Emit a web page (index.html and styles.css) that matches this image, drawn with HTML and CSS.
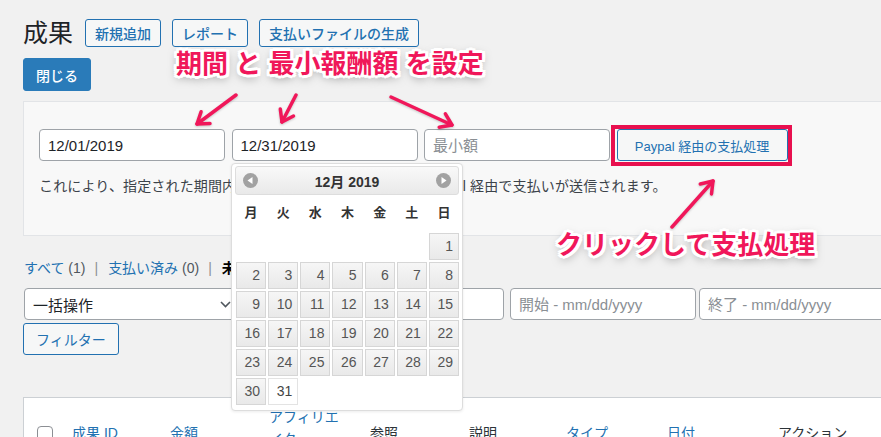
FILE: index.html
```html
<!DOCTYPE html>
<html lang="ja">

<head>
    <meta charset="UTF-8">
    <meta name="viewport" content="width=device-width, initial-scale=1.0">
    <title>成果</title>
    <link rel="stylesheet" href="styles.css">
</head>

<body>
    <div class="wrap">
        <div class="title-row">
            <h1>成果</h1>
            <a class="btn" href="#">新規追加</a>
            <a class="btn" href="#">レポート</a>
            <a class="btn" href="#">支払いファイルの生成</a>
        </div>

        <button class="btn-primary">閉じる</button>

        <div class="payout-panel">
            <div class="payout-fields">
                <input class="field" type="text" value="12/01/2019">
                <input class="field" type="text" value="12/31/2019">
                <input class="field" type="text" placeholder="最小額">
                <button class="btn btn-paypal">Paypal 経由の支払処理</button>
            </div>
            <p class="payout-note">これにより、指定された期間内の未払い成果すべてに対して Paypal 経由で支払いが送信されます。</p>
        </div>

        <ul class="subsubsub">
            <li><a href="#">すべて</a> <span class="count">(1)</span><span class="sep">|</span></li>
            <li><a href="#">支払い済み</a> <span class="count">(0)</span><span class="sep">|</span></li>
            <li class="current">未払い <span class="count">(1)</span></li>
        </ul>

        <div class="filters">
            <div class="select">
                <span>一括操作</span>
                <svg width="11" height="7" viewBox="0 0 11 7"><path d="M1 1l4.5 4.5L10 1" fill="none" stroke="#50575e" stroke-width="1.6"/></svg>
            </div>
            <input class="field field-affiliate" type="text" placeholder="アフィリエイター">
            <input class="field" type="text" placeholder="開始 - mm/dd/yyyy">
            <input class="field field-end" type="text" placeholder="終了 - mm/dd/yyyy">
        </div>
        <button class="btn btn-filter">フィルター</button>

        <div class="list-table">
            <div class="thead">
                <div class="th th-check"><span class="checkbox"></span></div>
                <div class="th"><a href="#">成果 ID</a></div>
                <div class="th"><a href="#">金額</a></div>
                <div class="th th-wrap"><a href="#">アフィリエイター</a></div>
                <div class="th">参照</div>
                <div class="th">説明</div>
                <div class="th"><a href="#">タイプ</a></div>
                <div class="th"><a href="#">日付</a></div>
                <div class="th">アクション</div>
            </div>
        </div>
    </div>

    <!-- datepicker popup under the end date field -->
    <div class="datepicker">
        <div class="dp-header">
            <svg width="15" height="15" viewBox="0 0 15 15"><circle cx="7.5" cy="7.5" r="7.5" fill="#a2a2a2"/><path d="M9.5 4v7L4.5 7.5z" fill="#fff"/></svg>
            <span class="dp-title">12月 2019</span>
            <svg width="15" height="15" viewBox="0 0 15 15"><circle cx="7.5" cy="7.5" r="7.5" fill="#a2a2a2"/><path d="M5.5 4v7l5-3.5z" fill="#fff"/></svg>
        </div>
        <div class="dp-weekdays">
            <span>月</span><span>火</span><span>水</span><span>木</span><span>金</span><span>土</span><span>日</span>
        </div>
        <div class="dp-days">
            <span class="empty"></span><span class="empty"></span><span class="empty"></span>
            <span class="empty"></span><span class="empty"></span><span class="empty"></span>
            <a>1</a>
            <a>2</a><a>3</a><a>4</a><a>5</a><a>6</a><a>7</a><a>8</a>
            <a>9</a><a>10</a><a>11</a><a>12</a><a>13</a><a>14</a><a>15</a>
            <a>16</a><a>17</a><a>18</a><a>19</a><a>20</a><a>21</a><a>22</a>
            <a>23</a><a>24</a><a>25</a><a>26</a><a>27</a><a>28</a><a>29</a>
            <a>30</a><a class="active">31</a>
        </div>
    </div>

    <!-- annotations -->
    <div class="highlight"></div>
    <div class="note note-range">期間 と 最小報酬額 を設定</div>
    <div class="note note-click">クリックして支払処理</div>
    <svg class="arrows" width="881" height="437" viewBox="0 0 881 437">
        <g fill="none" stroke="#f0175a" stroke-width="3.5" stroke-linecap="round" stroke-linejoin="round">
            <path d="M236 95L197 124"/>
            <path d="M210 123.6L197 124L201.1 111.7"/>
            <path d="M296 95L282 122"/>
            <path d="M293.5 116L282 122L280.3 109.1"/>
            <path d="M391 97L452 125"/>
            <path d="M445.4 113.8L452 125L439.2 127.3"/>
            <path d="M672 227L713 181"/>
            <path d="M700.3 184L713 181L711.5 193.9"/>
        </g>
    </svg>
</body>

</html>
```

FILE: styles.css
```css
:root {
    --wp-blue: #2271b1;
    --text-color: #1d2327;
    --muted: #50575e;
    --border: #9ea3a8;
    --note-color: #f0175a;
}

html,
body {
    margin: 0;
    overflow: hidden;
}

body {
    position: relative;
    width: 881px;
    height: 437px;
    background-color: #f1f1f1;
    color: var(--text-color);
    font-family: "Liberation Sans", "Noto Sans CJK JP", sans-serif;
    font-size: 14px;
}

a {
    color: var(--wp-blue);
    text-decoration: none;
}

.wrap {
    width: 1100px;
    padding-left: 23px;
}

.title-row {
    display: flex;
    align-items: center;
    gap: 11px;
    margin-top: 19px;
    height: 28px;
}

h1 {
    margin: 0 1px 0 0;
    font-size: 25px;
    font-weight: 400;
    line-height: 28px;
}

.btn {
    display: inline-flex;
    align-items: center;
    box-sizing: border-box;
    height: 28px;
    padding: 0 9px;
    border: 1px solid var(--wp-blue);
    border-radius: 3px;
    background-color: #f6f7f7;
    color: var(--wp-blue);
    font-family: inherit;
    font-size: 14px;
    font-weight: 500;
}

.btn-primary {
    display: block;
    box-sizing: border-box;
    height: 33px;
    margin-top: 11px;
    padding: 0 12px;
    border: 1px solid #2a7bb9;
    border-radius: 3px;
    background-color: #2a7bb9;
    color: #fff;
    font-family: inherit;
    font-size: 14px;
    font-weight: 500;
}

.payout-panel {
    margin-top: 10px;
    padding: 27px 15px 38px;
    border: 1px solid #e2e4e7;
    background-color: #f8f8f8;
}

.payout-fields {
    display: flex;
    gap: 6.5px;
}

.field {
    box-sizing: border-box;
    width: 186px;
    height: 32px;
    margin: 0;
    padding: 0 8px;
    border: 1px solid var(--border);
    border-radius: 4px;
    background-color: #fff;
    color: var(--text-color);
    font-family: inherit;
    font-size: 15px;
}

.field::placeholder {
    color: #8a8f94;
}

.btn-paypal {
    width: 171px;
    height: 32px;
    justify-content: center;
    padding: 0;
    font-size: 13px;
    font-weight: 400;
}

.payout-note {
    margin: 14px 0 0;
    color: #3c434a;
    font-size: 14px;
    line-height: 22px;
    letter-spacing: 0.15px;
}

.subsubsub {
    display: flex;
    margin: 21px 0 0 1px;
    padding: 0;
    list-style: none;
    line-height: 22px;
    color: var(--muted);
}

.subsubsub .sep {
    margin: 0 10px 0 9px;
    color: #8c8f94;
}

.subsubsub .current {
    color: #000;
    font-weight: 600;
}

.filters {
    display: flex;
    gap: 6px;
    margin: 9px 0 0 1px;
}

.select {
    display: flex;
    align-items: center;
    justify-content: space-between;
    box-sizing: border-box;
    width: 216px;
    height: 32px;
    padding: 0 8px 0 8px;
    border: 1px solid var(--border);
    border-radius: 4px;
    background-color: #fff;
    font-size: 15px;
}

.field-affiliate {
    width: 258px;
}

.field-end {
    margin-left: -3px;
}

.btn-filter {
    display: flex;
    height: 32px;
    margin-top: 3px;
    padding: 0 12px;
    font-weight: 400;
}

.list-table {
    margin-top: 42px;
    border: 1px solid #ccd0d4;
    background-color: #fff;
}

.thead {
    display: grid;
    grid-template-columns: 48px 98px 99px 101px 99px 97px 101px 111px 120px;
    height: 60px;
    font-size: 14px;
    line-height: 22px;
    color: #2c3338;
}

.th {
    padding-top: 24px;
}

.th-wrap {
    padding-top: 8px;
}

.th-wrap a {
    display: block;
    width: 72px;
    word-break: break-all;
}

.th-check {
    padding: 28px 0 0 13px;
}

.checkbox {
    display: block;
    box-sizing: border-box;
    width: 16px;
    height: 16px;
    border: 1px solid #8c8f94;
    border-radius: 4px;
    background-color: #fff;
}

/* datepicker */
.datepicker {
    position: absolute;
    left: 231px;
    top: 163px;
    box-sizing: border-box;
    width: 232px;
    padding: 2px 3px 5px;
    border: 1px solid #dddddd;
    border-radius: 4px;
    background-color: #fff;
    box-shadow: 0 1px 3px rgba(0, 0, 0, 0.08);
}

.dp-header {
    display: flex;
    align-items: center;
    justify-content: space-between;
    box-sizing: border-box;
    height: 29px;
    padding: 0 7px;
    border: 1px solid #dddddd;
    border-radius: 3px;
    background: linear-gradient(#f9f9f9, #e9e9e9);
}

.dp-title {
    color: #333;
    font-size: 14px;
    font-weight: 700;
}

.dp-weekdays,
.dp-days {
    display: grid;
    grid-template-columns: repeat(7, 1fr);
    column-gap: 2px;
    padding-left: 1px;
}

.dp-weekdays span {
    height: 36px;
    line-height: 36px;
    text-align: center;
    color: #333;
    font-size: 13px;
    font-weight: 700;
}

.dp-days {
    row-gap: 2px;
    margin-top: 2px;
}

.dp-days a,
.dp-days span {
    box-sizing: border-box;
    height: 27px;
}

.dp-days a {
    padding-right: 5px;
    border: 1px solid #d6d6d6;
    background: linear-gradient(#f6f6f6, #e9e9e9);
    color: #555;
    font-size: 14px;
    line-height: 25px;
    text-align: right;
}

.dp-days a.active {
    border-color: #e3e3e3;
    background: #fff;
    color: #454545;
}

/* annotation overlays */
.highlight {
    position: absolute;
    left: 611px;
    top: 125px;
    box-sizing: border-box;
    width: 181px;
    height: 41px;
    border: 4px solid #e8104f;
}

.note {
    position: absolute;
    color: var(--note-color);
    font-weight: 700;
    font-size: 26px;
    line-height: 26px;
    white-space: nowrap;
    text-shadow:
        0 0 2px #fff,
        2px 2px 0 #fff,
        -2px -2px 0 #fff,
        2px -2px 0 #fff,
        -2px 2px 0 #fff,
        3px 0 0 #fff,
        -3px 0 0 #fff,
        0 3px 0 #fff,
        0 -3px 0 #fff,
        3px 2px 0 #fff,
        -3px 2px 0 #fff,
        3px -2px 0 #fff,
        -3px -2px 0 #fff,
        0 3px 10px rgba(0, 0, 0, 0.5);
}

.note-range {
    left: 176px;
    top: 51px;
}

.note-click {
    left: 556px;
    top: 232px;
}

.arrows {
    position: absolute;
    left: 0;
    top: 0;
    pointer-events: none;
    filter: drop-shadow(0 1px 1px rgba(0, 0, 0, 0.2));
}
```
